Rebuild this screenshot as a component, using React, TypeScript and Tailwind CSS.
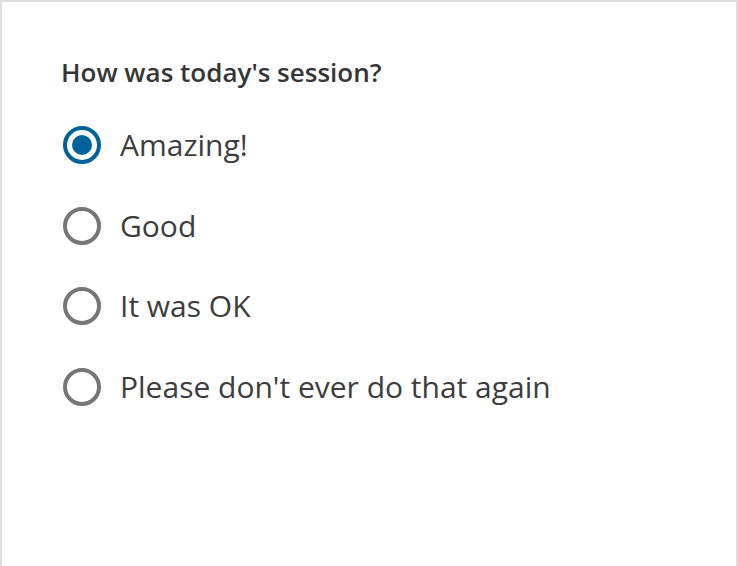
import { useState } from "react";

const options = [
  "Amazing!",
  "Good",
  "It was OK",
  "Please don't ever do that again",
];

function Radio({ checked }: { checked: boolean }) {
  return (
    <span
      className={`ml-[2px] flex h-[38px] w-[38px] shrink-0 items-center justify-center rounded-full border-4 ${
        checked ? "border-[#00629b]" : "border-[#767676]"
      }`}
    >
      {checked && <span className="h-5 w-5 rounded-full bg-[#00629b]" />}
    </span>
  );
}

export default function App() {
  const [selected, setSelected] = useState(0);

  return (
    <div
      className="h-[566px] w-[738px] overflow-hidden bg-white"
      style={{ fontFamily: '"Open Sans", sans-serif' }}
    >
      <div className="h-[600px] border-2 border-[#dddddd] bg-white pl-[59px] pt-[52px]">
        <fieldset>
          <legend className="text-[26px] font-semibold leading-[36px] text-[#363636]">
            How was today's session?
          </legend>
          <div className="mt-[35px] flex flex-col gap-[40.5px]">
            {options.map((label, i) => (
              <label
                key={label}
                className="flex h-[40px] cursor-pointer items-center gap-[19px]"
                onClick={() => setSelected(i)}
              >
                <Radio checked={selected === i} />
                <span className="text-[30px] leading-[40px] text-[#3d3d3d]">
                  {label}
                </span>
              </label>
            ))}
          </div>
        </fieldset>
      </div>
    </div>
  );
}
